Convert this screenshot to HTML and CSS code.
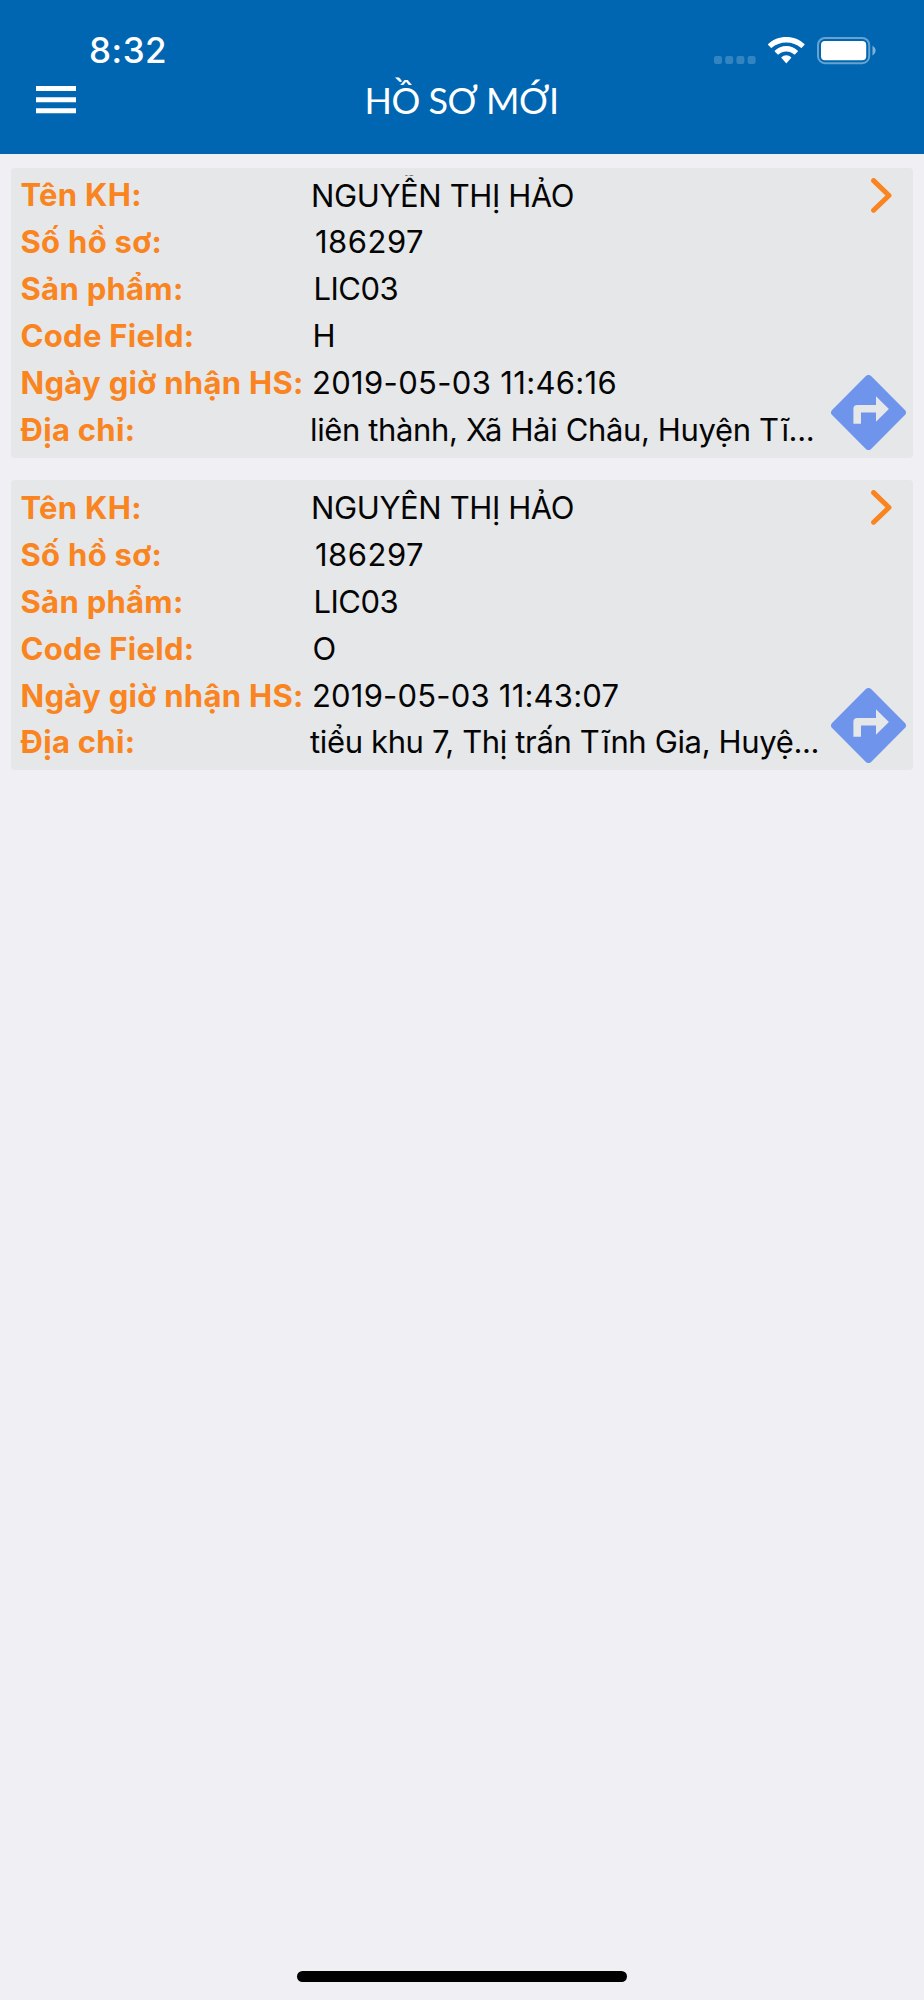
FILE: index.html
```html
<!DOCTYPE html>
<html lang="vi">
<head>
<meta charset="utf-8">
<title>Hồ sơ mới</title>
<link rel="stylesheet" href="styles.css">
</head>
<body>
<div class="screen">
  <header class="header">
    <div class="status">
      <span class="time">8:32</span>
      <div class="indicators">
        <svg class="signal" width="42" height="8" viewBox="0 0 42 8"><rect width="8" height="8" rx="2.2"/><rect x="11.2" width="8" height="8" rx="2.2"/><rect x="22.4" width="8" height="8" rx="2.2"/><rect x="33.6" width="8" height="8" rx="2.2"/></svg>
        <svg class="wifi" width="37" height="27" viewBox="0 0 37 27"><path d="M18.3 0C25.3 0 31.7 2.6 36.4 7.1Q36.8 7.5 36.4 7.9L33.7 10.8Q33.3 11.2 32.9 10.8C29 7.3 23.9 5.4 18.3 5.4S7.6 7.3 3.7 10.8Q3.3 11.2 2.9 10.8L.2 7.9Q-.2 7.5 .2 7.1C4.9 2.6 11.3 0 18.3 0Z"/><path d="M18.3 9C22.7 9 26.8 10.7 29.8 13.7Q30.2 14.1 29.8 14.5L26.9 17.4Q26.5 17.8 26.1 17.4C24 15.5 21.3 14.4 18.3 14.4S12.6 15.5 10.5 17.4Q10.1 17.8 9.7 17.4L6.8 14.5Q6.4 14.1 6.8 13.7C9.8 10.7 13.9 9 18.3 9Z"/><path d="M18.3 18.2C20.2 18.2 21.9 18.9 23.1 20.2Q23.5 20.6 23.1 21L18.7 26.1Q18.3 26.5 17.9 26.1L13.5 21Q13.1 20.6 13.5 20.2C14.7 18.9 16.4 18.2 18.3 18.2Z"/></svg>
        <svg class="battery" width="60" height="28" viewBox="0 0 60 28"><rect class="shell" x="1" y="1" width="51.2" height="25.2" rx="7"/><rect x="4" y="4" width="45.2" height="19.2" rx="4"/><path class="tip" d="M55.5 8.8C57.3 9.8 58.6 11.6 58.6 13.6S57.3 17.5 55.5 18.4Z"/></svg>
      </div>
    </div>
    <nav class="bar">
      <svg class="menu" width="40" height="28" viewBox="0 0 40 28"><path d="M0 0h40v5H0zM0 11.2h40v5H0zM0 22.3h40v5H0z"/></svg>
      <h1 class="title">HỒ SƠ MỚI</h1>
    </nav>
  </header>

  <main class="list">
    <article class="card">
      <dl class="fields">
        <div class="row"><dt>Tên KH:</dt><dd class="name">NGUYỄN THỊ HẢO</dd></div>
        <div class="row"><dt>Số hồ sơ:</dt><dd class="number">186297</dd></div>
        <div class="row"><dt>Sản phẩm:</dt><dd class="product">LIC03</dd></div>
        <div class="row"><dt>Code Field:</dt><dd class="code">H</dd></div>
        <div class="row"><dt>Ngày giờ nhận HS:</dt><dd class="date">2019-05-03 11:46:16</dd></div>
        <div class="row"><dt>Địa chỉ:</dt><dd class="address">liên thành, Xã Hải Châu, Huyện Tĩ...</dd></div>
      </dl>
      <div class="actions">
        <svg class="chevron" width="22" height="35" viewBox="0 0 22 35"><path d="M2.6 2.6L18 17.5L2.6 32.2"/></svg>
        <svg class="route" width="75" height="75" viewBox="0 0 75 75"><path fill-rule="evenodd" d="M34.9 1.1Q37.5-1.3 40.1 1.1L73.9 34.9Q76.3 37.5 73.9 40.1L40.1 73.9Q37.5 76.3 34.9 73.9L1.1 40.1Q-1.3 37.5 1.1 34.9ZM45 21.2V30H26.2Q22.4 30 22.4 33.8V48.7H30V37.5H45V46.8L57.9 34Z"/></svg>
      </div>
    </article>
    <article class="card">
      <dl class="fields">
        <div class="row"><dt>Tên KH:</dt><dd class="name">NGUYỄN THỊ HẢO</dd></div>
        <div class="row"><dt>Số hồ sơ:</dt><dd class="number">186297</dd></div>
        <div class="row"><dt>Sản phẩm:</dt><dd class="product">LIC03</dd></div>
        <div class="row"><dt>Code Field:</dt><dd class="code">O</dd></div>
        <div class="row"><dt>Ngày giờ nhận HS:</dt><dd class="date late">2019-05-03 11:43:07</dd></div>
        <div class="row"><dt>Địa chỉ:</dt><dd class="address">tiểu khu 7, Thị trấn Tĩnh Gia, Huyệ...</dd></div>
      </dl>
      <div class="actions">
        <svg class="chevron" width="22" height="35" viewBox="0 0 22 35"><path d="M2.6 2.6L18 17.5L2.6 32.2"/></svg>
        <svg class="route" width="75" height="75" viewBox="0 0 75 75"><path fill-rule="evenodd" d="M34.9 1.1Q37.5-1.3 40.1 1.1L73.9 34.9Q76.3 37.5 73.9 40.1L40.1 73.9Q37.5 76.3 34.9 73.9L1.1 40.1Q-1.3 37.5 1.1 34.9ZM45 21.2V30H26.2Q22.4 30 22.4 33.8V48.7H30V37.5H45V46.8L57.9 34Z"/></svg>
      </div>
    </article>
  </main>
  <div class="home-indicator"></div>
</div>
</body>
</html>
```

FILE: styles.css
```css
* { box-sizing: border-box; }
body { margin: 0; background: #efeff4; font-family: Inter, "Noto Sans", sans-serif; }
.screen { width: 924px; height: 2000px; display: flex; flex-direction: column; overflow: hidden; }
.header { height: 154px; flex: none; background: #0066b2; color: #fff; }
.status { height: 76px; padding: 28px 47px 0 89px; display: flex; justify-content: space-between; align-items: flex-start; }
.time { font-size: 35px; font-weight: 500; line-height: 44px; letter-spacing: .5px; }
.indicators { display: flex; align-items: flex-start; padding-top: 9px; }
.indicators svg { fill: #fff; flex: none; }
.signal { margin: 18.5px 12px 0 0; opacity: .2; }
.wifi { margin-right: 12px; }
.battery .shell { fill: none; stroke: #fff; stroke-width: 2; opacity: .4; }
.battery .tip { opacity: .5; }
.bar { height: 78px; padding: 0 37px 0 36px; display: grid; grid-template-columns: 40px 1fr 40px; align-items: start; }
.menu { fill: #fff; margin-top: 10px; }
.title { margin: 2px 0 0; font: 400 36px/44px Lato, sans-serif; letter-spacing: -.5px; text-align: center; white-space: nowrap; }
.list { flex: 1; padding: 13.5px 11px 0; display: flex; flex-direction: column; gap: 22.5px; }
.card { height: 290px; padding: 5px 7.3px 0 9.5px; border-radius: 4px; background: #e5e7e9; display: flex; justify-content: space-between; }
.fields { margin: 0; }
.row { height: 46.9px; display: flex; align-items: center; font-size: 31px; white-space: nowrap; }
dt { width: 289px; padding-bottom: 2px; color: #f98420; font-weight: 650; letter-spacing: .3px; }
dd { margin: 0; color: #050505; line-height: 46.9px; }
.name { padding-left: 1.5px; letter-spacing: -.38px; clip-path: inset(3px 0 0 0); }
.number { padding-left: 5.5px; letter-spacing: .5px; }
.product { padding-left: 4px; letter-spacing: -.5px; }
.code { padding-left: 3px; }
.date { padding-left: 2.5px; letter-spacing: .33px; }
.date.late { letter-spacing: .2px; }
.address { padding-left: .5px; letter-spacing: -.36px; }
.actions { display: flex; flex-direction: column; align-items: flex-end; justify-content: space-between; padding: 5px 0 7.5px; }
.chevron { margin-right: 12.7px; fill: none; stroke: #f98420; stroke-width: 5; stroke-linecap: round; stroke-linejoin: round; }
.route { fill: #6f94ec; }
.home-indicator { width: 330px; height: 11px; margin: 0 auto 18px; border-radius: 6px; background: #000; flex: none; }
```
